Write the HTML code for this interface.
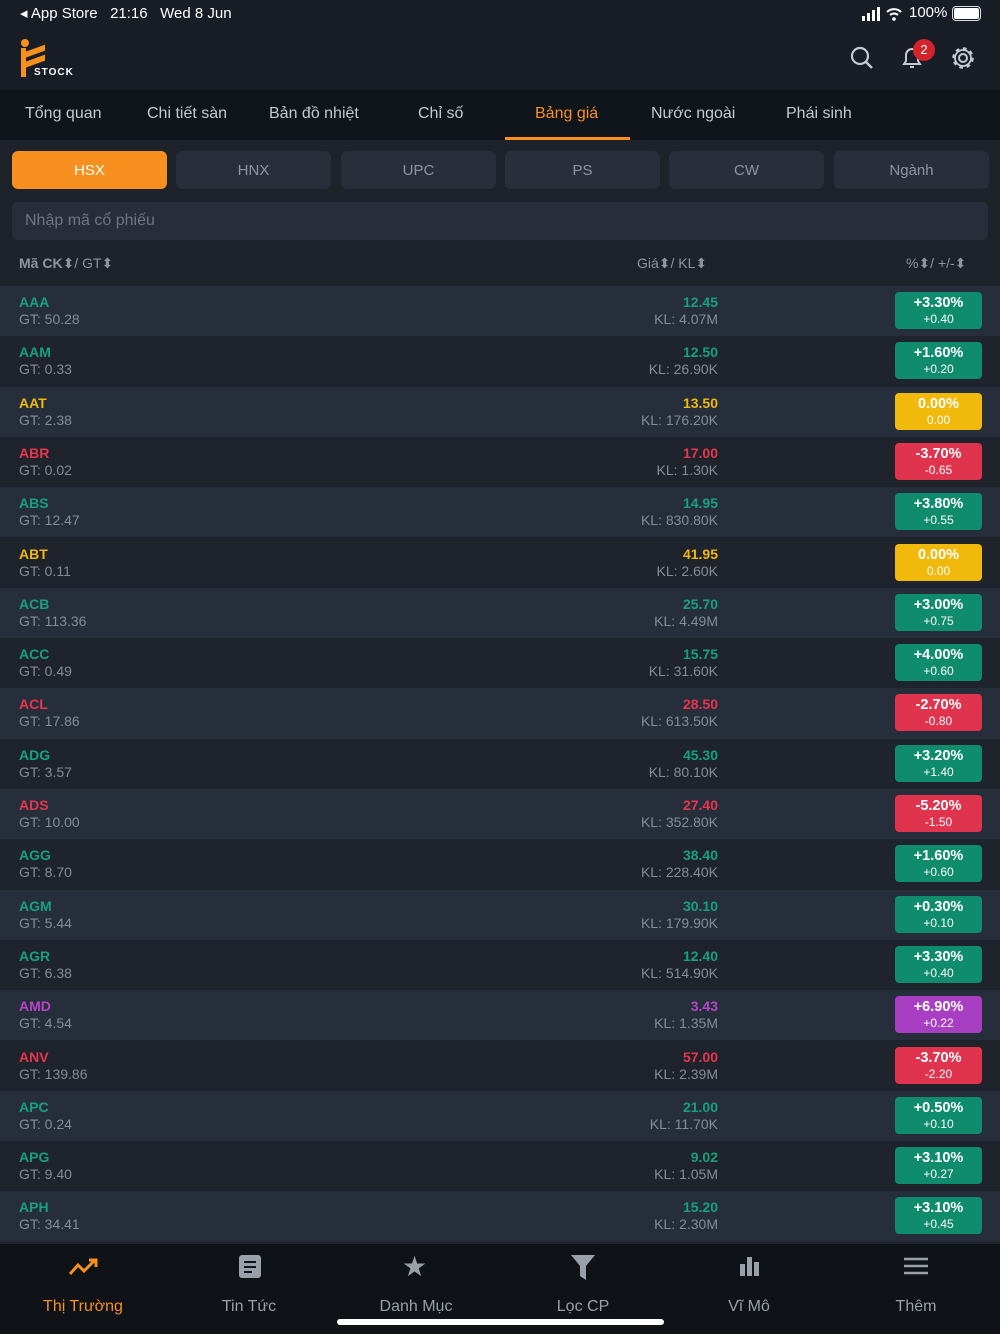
<!DOCTYPE html>
<html><head><meta charset="utf-8"><style>
*{margin:0;padding:0;box-sizing:border-box}
body{width:1000px;height:1334px;background:#1d222b;font-family:"Liberation Sans",sans-serif;position:relative;overflow:hidden;color:#fff}
.abs{position:absolute}
.top{left:0;top:0;width:1000px;height:90px;background:#181d26}
.tabs{left:0;top:90px;width:1000px;height:50px;background:#10141b}
.tab{position:absolute;top:105px;font-size:16px;color:#c5c9d0}
.seg{position:absolute;top:151px;width:155px;height:38px;border-radius:6px;background:#282e3a;color:#8e95a1;font-size:15px;text-align:center;line-height:40px}
.row{position:absolute;left:0;width:1000px;height:50.3px}
.row .s{position:absolute;left:19px;top:8px;font-size:14px;font-weight:bold}
.row .g{position:absolute;left:19px;top:25px;font-size:14px;color:#858c98}
.row .p{position:absolute;right:282px;top:8px;font-size:14px;font-weight:bold}
.row .k{position:absolute;right:282px;top:25px;font-size:14px;color:#858c98}
.row .b{position:absolute;left:895px;top:6px;width:87px;height:37px;border-radius:4px;text-align:center;color:#fff}
.b .a{font-size:14.5px;font-weight:bold;margin-top:3px}
.b .c{font-size:12px;margin-top:1px}
.nav{left:0;top:1244px;width:1000px;height:90px;background:#0f1217}
.ni{position:absolute;top:1298px;font-size:16px;color:#9aa0a9;width:166px;text-align:center}
</style></head><body>
<div class="abs top"></div>
<div class="abs" style="left:20px;top:4px;font-size:15px">◂ App Store&nbsp;&nbsp; 21:16&nbsp;&nbsp; Wed 8 Jun</div>
<svg class="abs" style="left:862px;top:7px" width="44" height="14"><rect x="0" y="9" width="3" height="5" fill="#fff"/><rect x="5" y="6" width="3" height="8" fill="#fff"/><rect x="10" y="3" width="3" height="11" fill="#fff"/><rect x="15" y="0" width="3" height="14" fill="#fff"/><path d="M25 5a10 10 0 0 1 14 0M28 8a6 6 0 0 1 8 0" stroke="#fff" stroke-width="2" fill="none"/><circle cx="32" cy="12" r="1.8" fill="#fff"/></svg>
<div class="abs" style="left:909px;top:4px;font-size:15px">100%</div>
<div class="abs" style="left:952px;top:6px;width:29px;height:15px;border:1.5px solid #ddd;border-radius:4px;padding:1px"><div style="width:100%;height:100%;background:#fff;border-radius:2px"></div></div>
<div class="abs" style="left:21px;top:39px;width:8px;height:8px;border-radius:50%;background:#f7901e"></div>
<div class="abs" style="left:21px;top:48px;width:5px;height:29px;background:#f7901e"></div>
<div class="abs" style="left:21px;top:49px;width:24px;height:6px;background:#f7901e;transform:skewY(-20deg)"></div>
<div class="abs" style="left:21px;top:59px;width:24px;height:6px;background:#f7901e;transform:skewY(-20deg)"></div>
<div class="abs" style="left:34px;top:67px;font-size:10px;font-weight:bold;letter-spacing:1px">STOCK</div>
<svg class="abs" style="left:848px;top:44px" width="28" height="28" viewBox="0 0 28 28"><circle cx="12" cy="12" r="8" fill="none" stroke="#c5c9d0" stroke-width="2.2"/><path d="M18 18l6 6" stroke="#c5c9d0" stroke-width="2.4"/></svg>
<svg class="abs" style="left:900px;top:44px" width="26" height="28" viewBox="0 0 26 28"><path d="M4 20h16l-2-3v-6a6 6 0 0 0-12 0v6z M10 23h4" fill="none" stroke="#c5c9d0" stroke-width="2"/></svg>
<div class="abs" style="left:913px;top:39px;width:22px;height:22px;border-radius:50%;background:#d3242c;font-size:13px;text-align:center;line-height:22px">2</div>
<svg class="abs" style="left:949px;top:44px" width="28" height="28" viewBox="0 0 28 28"><circle cx="14" cy="14" r="4" fill="none" stroke="#c5c9d0" stroke-width="2"/><circle cx="14" cy="14" r="9" fill="none" stroke="#c5c9d0" stroke-width="3.5" stroke-dasharray="3.5 3.5"/><circle cx="14" cy="14" r="8" fill="none" stroke="#c5c9d0" stroke-width="1.8"/></svg>
<div class="abs tabs"></div>
<div class="tab" style="left:25px">Tổng quan</div>
<div class="tab" style="left:147px">Chi tiết sàn</div>
<div class="tab" style="left:269px">Bản đồ nhiệt</div>
<div class="tab" style="left:418px">Chỉ số</div>
<div class="tab" style="left:535px;color:#f7901e">Bảng giá</div>
<div class="tab" style="left:651px">Nước ngoài</div>
<div class="tab" style="left:786px">Phái sinh</div>
<div class="abs" style="left:505px;top:137px;width:125px;height:3px;background:#f7901e"></div>
<div class="seg" style="left:12px;background:#f7901e;color:#fff">HSX</div>
<div class="seg" style="left:176px">HNX</div>
<div class="seg" style="left:341px">UPC</div>
<div class="seg" style="left:505px">PS</div>
<div class="seg" style="left:669px">CW</div>
<div class="seg" style="left:834px">Ngành</div>
<div class="abs" style="left:12px;top:202px;width:976px;height:38px;border-radius:6px;background:#272d39;color:#6f7682;font-size:16px;line-height:38px;padding-left:13px">Nhập mã cổ phiếu</div>
<div class="abs" style="left:19px;top:255px;font-size:14px;color:#8e95a1"><b>Mã CK</b>⬍/ GT⬍</div>
<div class="abs" style="left:637px;top:255px;font-size:14px;color:#8e95a1">Giá⬍/ KL⬍</div>
<div class="abs" style="left:906px;top:255px;font-size:14px;color:#8e95a1">%⬍/ +/-⬍</div>
<div id="rows"></div>
<div class="abs nav"></div>
<svg class="abs" style="left:68px;top:1256px" width="32" height="22" viewBox="0 0 32 22"><path d="M2 18l8-9 6 6 11-11M21 4h7v7" fill="none" stroke="#f7901e" stroke-width="3"/></svg>
<svg class="abs" style="left:238px;top:1254px" width="24" height="26"><rect x="1" y="1" width="22" height="23" rx="3" fill="#9aa0a9"/><path d="M6 8h12M6 13h12M6 18h8" stroke="#0f1217" stroke-width="2"/></svg>
<div class="abs" style="left:402px;top:1250px;font-size:28px;color:#9aa0a9">★</div>
<svg class="abs" style="left:570px;top:1254px" width="26" height="26"><path d="M1 1h24l-9 11v14l-6-4v-10z" fill="#9aa0a9"/></svg>
<svg class="abs" style="left:739px;top:1256px" width="22" height="20"><rect x="1" y="8" width="5" height="12" fill="#9aa0a9"/><rect x="8" y="1" width="5" height="19" fill="#9aa0a9"/><rect x="15" y="6" width="5" height="14" fill="#9aa0a9"/></svg>
<svg class="abs" style="left:904px;top:1257px" width="24" height="18"><path d="M0 2h24M0 9h24M0 16h24" stroke="#9aa0a9" stroke-width="2.5"/></svg>
<div class="ni" style="left:0;color:#f7901e">Thị Trường</div>
<div class="ni" style="left:166px">Tin Tức</div>
<div class="ni" style="left:333px">Danh Mục</div>
<div class="ni" style="left:500px">Lọc CP</div>
<div class="ni" style="left:666px">Vĩ Mô</div>
<div class="ni" style="left:833px">Thêm</div>
<div class="abs" style="left:337px;top:1319px;width:327px;height:6px;border-radius:3px;background:#fff"></div>
<script>
var d=[["AAA","50.28","12.45","4.07M","+3.30%","+0.40","g"],["AAM","0.33","12.50","26.90K","+1.60%","+0.20","g"],["AAT","2.38","13.50","176.20K","0.00%","0.00","y"],["ABR","0.02","17.00","1.30K","-3.70%","-0.65","r"],["ABS","12.47","14.95","830.80K","+3.80%","+0.55","g"],["ABT","0.11","41.95","2.60K","0.00%","0.00","y"],["ACB","113.36","25.70","4.49M","+3.00%","+0.75","g"],["ACC","0.49","15.75","31.60K","+4.00%","+0.60","g"],["ACL","17.86","28.50","613.50K","-2.70%","-0.80","r"],["ADG","3.57","45.30","80.10K","+3.20%","+1.40","g"],["ADS","10.00","27.40","352.80K","-5.20%","-1.50","r"],["AGG","8.70","38.40","228.40K","+1.60%","+0.60","g"],["AGM","5.44","30.10","179.90K","+0.30%","+0.10","g"],["AGR","6.38","12.40","514.90K","+3.30%","+0.40","g"],["AMD","4.54","3.43","1.35M","+6.90%","+0.22","p"],["ANV","139.86","57.00","2.39M","-3.70%","-2.20","r"],["APC","0.24","21.00","11.70K","+0.50%","+0.10","g"],["APG","9.40","9.02","1.05M","+3.10%","+0.27","g"],["APH","34.41","15.20","2.30M","+3.10%","+0.45","g"]];
var tc={g:"#17a07e",y:"#f0b90b",r:"#e8354f",p:"#b545cc"},bc={g:"#0f8c6c",y:"#f0b90b",r:"#e0334d",p:"#a83fc2"};
var h="";d.forEach(function(r,i){h+='<div class="row" style="top:'+(286+i*50.3)+'px;background:'+(i%2?'#1e232c':'#272e3b')+'"><div class="s" style="color:'+tc[r[6]]+'">'+r[0]+'</div><div class="g">GT: '+r[1]+'</div><div class="p" style="color:'+tc[r[6]]+'">'+r[2]+'</div><div class="k">KL: '+r[3]+'</div><div class="b" style="background:'+bc[r[6]]+'"><div class="a">'+r[4]+'</div><div class="c">'+r[5]+'</div></div></div>'});
document.getElementById("rows").innerHTML=h;
</script>
</body></html>
